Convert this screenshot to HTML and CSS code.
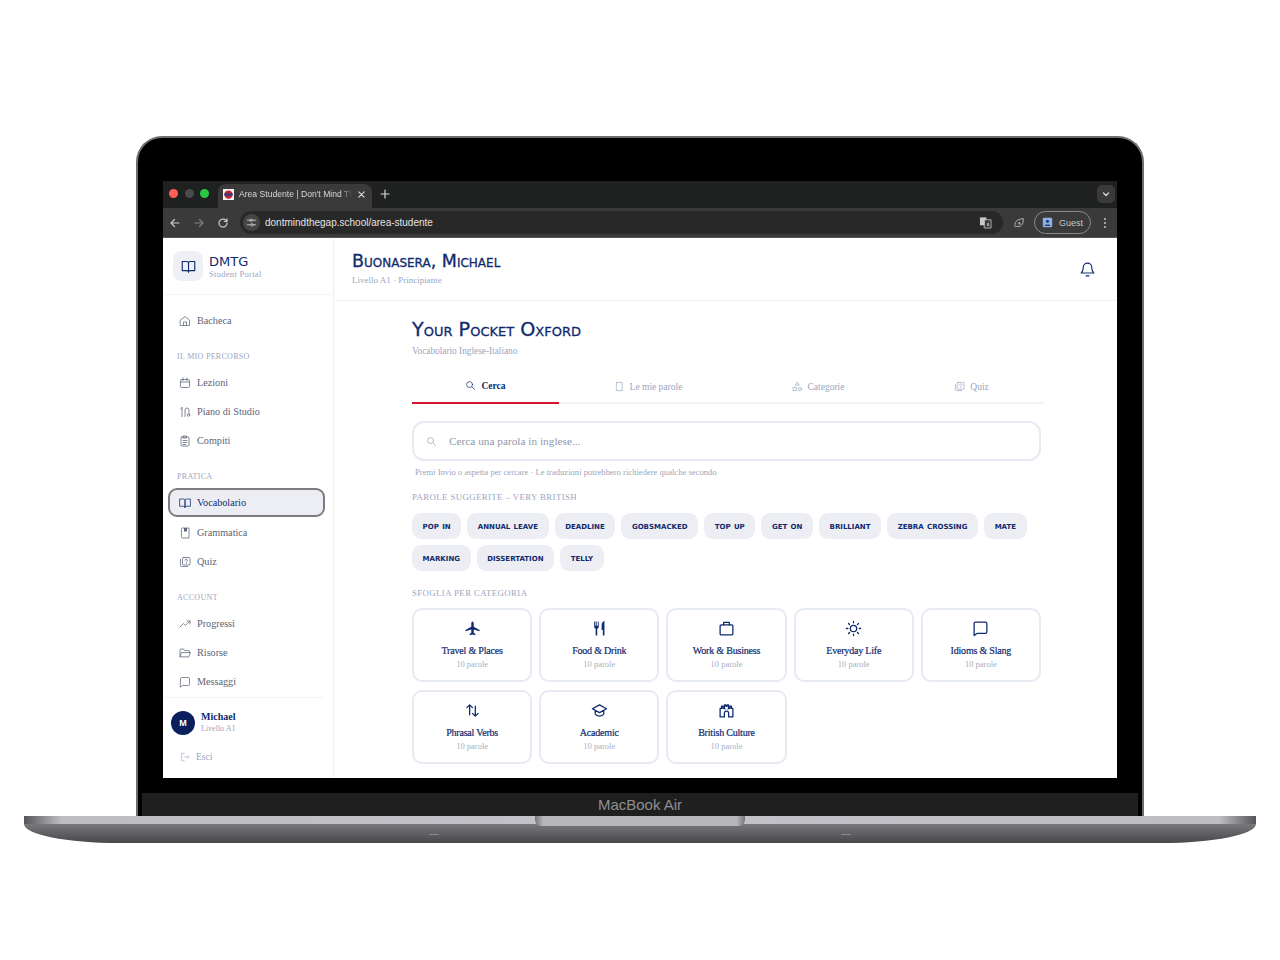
FILE: index.html
```html
<!DOCTYPE html>
<html lang="it">
<head>
<meta charset="utf-8">
<title>Area Studente | Don't Mind The Gap</title>
<link rel="stylesheet" href="styles.css">
</head>
<body>
<svg class="sprite" aria-hidden="true">
	<symbol id="i-book" viewBox="0 0 24 24"><path d="M2 4h7a3 3 0 0 1 3 3v14a2.500 2.500 0 0 0-2.500-2.500H2zM22 4h-7a3 3 0 0 0-3 3v14a2.500 2.500 0 0 1 2.500-2.500H22z"/></symbol>
	<symbol id="i-search" viewBox="0 0 24 24"><circle cx="10" cy="10" r="6.500"/><path d="M15 15l6 6"/></symbol>
	<symbol id="i-quiz" viewBox="0 0 24 24"><rect x="7" y="3" width="15" height="15" rx="2"/><path d="M3 7v12a2 2 0 0 0 2 2h12M12 8.500a2.500 2.500 0 1 1 3.500 2.500c-.8.400-1 .9-1 1.500M14.500 15v.1"/></symbol>
	<symbol id="i-msg" viewBox="0 0 24 24"><path d="M3 5a2 2 0 0 1 2-2h14a2 2 0 0 1 2 2v12a2 2 0 0 1-2 2H7l-4 3z"/></symbol>
</svg>

<div class="laptop">
	<div class="lid">
		<div class="screen">
			<div class="tabstrip">
				<div class="lights"><i class="red"></i><i class="off"></i><i class="green"></i></div>
				<div class="tab">
					<svg class="favicon" viewBox="0 0 12 12"><rect width="12" height="12" fill="#f4f4f4"/><circle cx="6" cy="6" r="4.500" fill="#c8202f"/><rect x="1.500" y="4.800" width="9" height="2.400" fill="#27408b"/></svg>
					<span class="tab-title">Area Studente | Don't Mind Th</span>
					<svg class="tab-x" viewBox="0 0 10 10"><path d="M2 2l6 6M8 2l-6 6"/></svg>
				</div>
				<svg class="tab-plus" viewBox="0 0 10 10"><path d="M5 1v8M1 5h8"/></svg>
				<div class="tab-menu"><svg viewBox="0 0 10 10"><path d="M2.500 4l2.500 2.500L7.500 4"/></svg></div>
			</div>
			<div class="toolbar">
				<svg class="tool" viewBox="0 0 12 12"><path d="M10 6H2M5.500 2.500L2 6l3.500 3.500"/></svg>
				<svg class="tool dim" viewBox="0 0 12 12"><path d="M2 6h8M6.500 2.500L10 6l-3.500 3.500"/></svg>
				<svg class="tool" viewBox="0 0 12 12"><path d="M10 6a4 4 0 1 1-1.200-2.800L10 4.500M10 1.800v2.700H7.300"/></svg>
				<div class="omnibox">
					<span class="tune"><svg viewBox="0 0 12 12"><path d="M1.500 3.500h3M7 3.500h3.500M1.500 8.500H5M8 8.500h2.500"/><circle cx="5.500" cy="3.500" r="1.300"/><circle cx="6.500" cy="8.500" r="1.300"/></svg></span>
					<span class="url">dontmindthegap.school/area-studente</span>
					<svg class="translate" viewBox="0 0 14 14"><rect x="1" y="1.500" width="7" height="8.500" fill="#c9c9c9" stroke="none"/><rect x="6" y="4" width="7" height="9" fill="#3c3c3c"/><path d="M9 10.500l.8-3 .8 3"/></svg>
				</div>
				<svg class="leaf" viewBox="0 0 14 14"><path d="M2.500 11.500C1 7 3.500 2.500 12 2c.5 7-3.500 10.500-8 9M6 7.500l2-1.500-1 2.500 1.500-.5"/></svg>
				<div class="guest">
					<svg viewBox="0 0 14 14"><rect x="1" y="1" width="12" height="12" rx="1.500" fill="#8fb0e8"/><circle cx="7" cy="5.500" r="2" fill="#24406f"/><path d="M3 11.500c1-2.500 7-2.500 8 0z" fill="#24406f"/></svg>
					<span>Guest</span>
				</div>
				<div class="dots"><i></i><i></i><i></i></div>
			</div>

			<div class="page">
				<aside class="sidebar">
					<div class="brand">
						<div class="brand-icon"><svg class="ic"><use href="#i-book"/></svg></div>
						<div>
							<div class="brand-name">DMTG</div>
							<div class="brand-sub">Student Portal</div>
						</div>
					</div>
					<nav class="nav">
						<a class="nav-item"><svg viewBox="0 0 24 24"><path d="M3 10l9-7 9 7v11H3zM9 21v-7h6v7"/></svg>Bacheca</a>
						<div class="nav-label">IL MIO PERCORSO</div>
						<a class="nav-item"><svg viewBox="0 0 24 24"><rect x="3" y="5" width="18" height="16" rx="2"/><path d="M3 10h18M8 2v5M16 2v5"/></svg>Lezioni</a>
						<a class="nav-item"><svg viewBox="0 0 24 24"><circle cx="19" cy="18" r="2.500"/><path d="M3 6l3-3 0 18M12 21V8a4 4 0 0 1 8 0v7M6 3h0"/></svg>Piano di Studio</a>
						<a class="nav-item"><svg viewBox="0 0 24 24"><rect x="4" y="4" width="16" height="18" rx="2"/><path d="M9 2h6v4H9zM8 11h8M8 15h8M8 19h5"/></svg>Compiti</a>
						<div class="nav-label">PRATICA</div>
						<a class="nav-item active"><svg><use href="#i-book"/></svg>Vocabolario</a>
						<a class="nav-item"><svg viewBox="0 0 24 24"><path d="M5 4a2 2 0 0 1 2-2h13v20H7a2 2 0 0 1-2-2z"/><path class="solid" d="M10 2h6v8l-3-2-3 2z"/></svg>Grammatica</a>
						<a class="nav-item"><svg><use href="#i-quiz"/></svg>Quiz</a>
						<div class="nav-label">ACCOUNT</div>
						<a class="nav-item"><svg viewBox="0 0 24 24"><path d="M2 18l7-7 4 4 9-9M16 6h6v6"/></svg>Progressi</a>
						<a class="nav-item"><svg viewBox="0 0 24 24"><path d="M2 19V6a2 2 0 0 1 2-2h5l2 3h8a2 2 0 0 1 2 2v2M2 19l3-8h18l-3 8z"/></svg>Risorse</a>
						<a class="nav-item"><svg><use href="#i-msg"/></svg>Messaggi</a>
					</nav>
					<div class="side-foot">
						<div class="user">
							<div class="avatar">M</div>
							<div>
								<div class="user-name">Michael</div>
								<div class="user-level">Livello A1</div>
							</div>
						</div>
						<a class="logout"><svg viewBox="0 0 24 24"><path d="M10 3H4v18h6M11 12h10M18 9l3 3-3 3"/></svg>Esci</a>
					</div>
				</aside>

				<main class="main">
					<header class="top">
						<div>
							<h1 class="greeting">Buonasera, Michael</h1>
							<div class="level">Livello A1 · Principiante</div>
						</div>
						<svg class="bell" viewBox="0 0 24 24"><path d="M6 9a6 6 0 0 1 12 0c0 5 1.500 6.500 3 8H3c1.500-1.500 3-3 3-8zM10 21h4"/></svg>
					</header>
					<div class="content">
						<h2 class="title">Your Pocket Oxford</h2>
						<div class="subtitle">Vocabolario Inglese-Italiano</div>
						<div class="tabs">
							<a class="tab-link on"><svg><use href="#i-search"/></svg>Cerca</a>
							<a class="tab-link"><svg viewBox="0 0 24 24"><path d="M6 3h12v18H6z"/></svg>Le mie parole</a>
							<a class="tab-link"><svg viewBox="0 0 24 24"><path d="M12 3l4 6H8zM3 14h7v7H3z"/><circle cx="17.500" cy="17.500" r="3.500"/></svg>Categorie</a>
							<a class="tab-link"><svg><use href="#i-quiz"/></svg>Quiz</a>
						</div>
						<div class="search">
							<svg><use href="#i-search"/></svg>
							<span>Cerca una parola in inglese...</span>
						</div>
						<div class="hint">Premi Invio o aspetta per cercare · Le traduzioni potrebbero richiedere qualche secondo</div>
						<div class="section-label">PAROLE SUGGERITE – VERY BRITISH</div>
						<div class="chips">
							<span class="chip">pop in</span>
							<span class="chip">annual leave</span>
							<span class="chip">deadline</span>
							<span class="chip">gobsmacked</span>
							<span class="chip">top up</span>
							<span class="chip">get on</span>
							<span class="chip">brilliant</span>
							<span class="chip">zebra crossing</span>
							<span class="chip">mate</span>
							<span class="chip">marking</span>
							<span class="chip">dissertation</span>
							<span class="chip">telly</span>
						</div>
						<div class="section-label browse">SFOGLIA PER CATEGORIA</div>
						<div class="cards">
							<div class="card">
								<svg class="fill" viewBox="0 0 24 24"><path d="M12 2c1 0 1.700 1.500 1.700 3v4.500L22 14v2l-8.300-2.500V18l2.300 1.700V21.500L12 20.500 8 21.500v-1.800l2.300-1.700v-4.500L2 16v-2l8.300-4.500V5C10.300 3.500 11 2 12 2z"/></svg>
								<b>Travel &amp; Places</b><small>10 parole</small>
							</div>
							<div class="card">
								<svg class="fill" viewBox="0 0 24 24"><path d="M5 2h1.200v6h1.300V2h1.200v6h1.300V2H11v7.500a3 3 0 0 1-2.200 2.800V22H6.600V12.300A3 3 0 0 1 4.500 9.500V2zM15 8c0-3.500 1.500-6 4-6.500V22h-2.300v-8H15z"/></svg>
								<b>Food &amp; Drink</b><small>10 parole</small>
							</div>
							<div class="card">
								<svg viewBox="0 0 24 24"><rect x="3" y="7" width="18" height="14" rx="1.500"/><path d="M8 7V3.500h8V7"/></svg>
								<b>Work &amp; Business</b><small>10 parole</small>
							</div>
							<div class="card">
								<svg viewBox="0 0 24 24"><circle cx="12" cy="12" r="4.500"/><path d="M12 2v2M12 20v2M2 12h2M20 12h2M5 5l1.400 1.400M17.600 17.600L19 19M5 19l1.400-1.400M17.600 6.400L19 5"/></svg>
								<b>Everyday Life</b><small>10 parole</small>
							</div>
							<div class="card">
								<svg><use href="#i-msg"/></svg>
								<b>Idioms &amp; Slang</b><small>10 parole</small>
							</div>
							<div class="card">
								<svg class="thick" viewBox="0 0 24 24"><path d="M8 18V4M4 8l4-4 4 4M16 6v14M12 16l4 4 4-4"/></svg>
								<b>Phrasal Verbs</b><small>10 parole</small>
							</div>
							<div class="card">
								<svg viewBox="0 0 24 24"><path d="M12 4L2 9.500 12 15l10-5.500zM6 12v5c2 4 10 4 12 0v-5"/></svg>
								<b>Academic</b><small>10 parole</small>
							</div>
							<div class="card">
								<svg viewBox="0 0 24 24"><path d="M3 21V9h2V6h2v3h2V4h2v2h2V4h2v5h2V6h2v3h2v12h-6v-5a3 3 0 0 0-6 0v5zM10 10h.1M14 10h.1"/></svg>
								<b>British Culture</b><small>10 parole</small>
							</div>
						</div>
					</div>
				</main>
			</div>
		</div>
		<div class="chin">MacBook Air</div>
	</div>
	<div class="base">
		<div class="notch"></div>
		<div class="deck"></div>
		<div class="belly"><i></i><i></i></div>
	</div>
</div>
</body>
</html>
```

FILE: styles.css
```css
*{margin:0;padding:0;box-sizing:border-box;}
body{background:#fff;font-family:"Liberation Serif",serif;color:#0f2a6d;height:960px;overflow:hidden;}
.sprite{width:0;height:0;position:absolute;}
svg{fill:none;stroke:currentColor;stroke-width:2;stroke-linecap:round;stroke-linejoin:round;flex:none;}
a{display:flex;align-items:center;}

/* laptop */
.laptop{display:flex;flex-direction:column;align-items:center;padding-top:136px;}
.lid{width:1008px;height:680px;background:#000;border:2px solid #6d6d70;border-bottom:0;border-radius:26px 26px 0 0;padding-top:43px;display:flex;flex-direction:column;align-items:center;}
.screen{width:954px;height:597px;overflow:hidden;background:#fff;display:flex;flex-direction:column;}
.chin{width:996px;height:23px;margin-top:15px;background:#1f1f1f;color:#8f8f92;font:15px/23px "Liberation Sans",sans-serif;text-align:center;}
.base{width:1232px;height:27px;position:relative;}
.deck{height:8px;background:linear-gradient(90deg,#55555a 0,#bdbdc2 3%,#c2c2c8 50%,#bdbdc2 97%,#55555a 100%);}
.belly{height:19px;background:linear-gradient(#77777c,#48484c);border-radius:0 0 95px 95px/0 0 19px 19px;display:flex;justify-content:space-between;padding:10px 405px 0 405px;}
.belly i{width:10px;height:1px;background:#8a8a8e;}
.notch{position:absolute;left:511px;top:0;width:210px;height:10px;background:linear-gradient(90deg,#77777a,#b6b6bb 4%,#b6b6bb 96%,#77777a);border-radius:0 0 6px 6px;}

/* browser chrome */
.tabstrip{height:27px;background:#1f2020;display:flex;align-items:flex-end;flex:none;}
.lights{display:flex;gap:6.500px;padding:0 9px 10px 6px;}
.lights i{width:9px;height:9px;border-radius:50%;}
.lights .red{background:#ff5f57;}
.lights .off{background:#4a4a4a;}
.lights .green{background:#28c840;}
.tab{width:154px;height:24px;background:#3a3a3a;border-radius:8px 8px 0 0;display:flex;align-items:center;padding:0 6px 4px 5px;gap:5px;}
.favicon{width:11px;height:11px;stroke:none;}
.tab-title{width:113px;white-space:nowrap;font:8.600px "Liberation Sans",sans-serif;color:#d6d6d6;-webkit-mask-image:linear-gradient(90deg,#000 90%,transparent);mask-image:linear-gradient(90deg,#000 90%,transparent);}
.tab-x{width:9px;height:9px;color:#d6d6d6;stroke-width:1.300;}
.tab-plus{width:10px;height:10px;color:#d6d6d6;margin:0 0 9px 8px;stroke-width:1.200;}
.tab-menu{margin:0 2px 5px auto;width:18px;height:18px;border-radius:5px;background:#3a3a3a;color:#d6d6d6;display:flex;align-items:center;justify-content:center;}
.tab-menu svg{width:10px;height:10px;stroke-width:1.300;}
.toolbar{height:30px;background:#3a3a3a;border-bottom:1px solid #555;display:flex;align-items:center;padding-left:6px;flex:none;color:#c7c7c7;}
.tool{width:12px;height:12px;margin-right:12px;stroke-width:1.200;}
.tool.dim{color:#808080;}
.omnibox{width:763px;height:23px;margin-left:-1px;background:#282828;border-radius:12px;display:flex;align-items:center;padding-left:3px;}
.tune{width:17px;height:17px;border-radius:50%;background:#454545;display:flex;align-items:center;justify-content:center;}
.tune svg{width:11px;height:11px;stroke-width:1;}
.url{font:10px "Liberation Sans",sans-serif;color:#e3e3e3;margin-left:5px;}
.translate{width:13px;height:13px;margin-left:auto;margin-right:11px;stroke-width:.8;color:#d0d0d0;}
.leaf{width:12px;height:12px;margin-left:10px;stroke-width:1;}
.guest{width:57px;height:23px;margin-left:9px;border:1px solid #8a8a8a;border-radius:12px;display:flex;align-items:center;gap:6px;padding-left:7px;font:9px "Liberation Sans",sans-serif;}
.guest svg{width:11px;height:11px;stroke:none;}
.dots{margin-left:13px;display:flex;flex-direction:column;gap:2px;}
.dots i{width:2px;height:2px;border-radius:50%;background:#c7c7c7;}

/* page */
.page{flex:1;display:flex;min-height:0;}
.sidebar{width:171px;border-right:1px solid #eef0f5;display:flex;flex-direction:column;flex:none;}
.brand{height:57px;border-bottom:1px solid #f3f4f8;display:flex;align-items:center;gap:6px;padding-left:10px;flex:none;}
.brand-icon{width:30px;height:30px;border-radius:8px;background:#eef0f5;display:flex;align-items:center;justify-content:center;}
.ic{width:15px;height:15px;stroke-width:1.800;}
.brand-name{font:13px/15px "DejaVu Sans",sans-serif;}
.brand-sub{font-size:8.500px;line-height:10px;color:#9aa6bf;letter-spacing:.3px;}
.nav{padding:11px 8px 0 5px;}
.nav-item{height:29px;border:2px solid transparent;border-radius:9px;padding-left:9px;gap:6px;font-size:10.200px;color:#5b6478;}
.nav-item svg{width:12px;height:12px;stroke-width:1.500;}
.nav-item .solid{fill:currentColor;stroke:none;}
.nav-item.active{background:#eceef4;border-color:#7d7d80;color:#0f2a6d;margin-bottom:1px;}
.nav-label{height:33px;padding:16px 0 0 9px;font-size:8px;line-height:12px;letter-spacing:.3px;color:#9aa6bf;}
.side-foot{margin:1px 8px 0 0;border-top:1px solid #f3f4f8;padding:13px 0 0 8px;}
.user{display:flex;align-items:center;gap:6px;}
.avatar{width:24px;height:24px;border-radius:50%;background:#0a1f5c;color:#fff;font:bold 9px/24px "Liberation Sans",sans-serif;text-align:center;}
.user-name{font-size:10px;line-height:12px;font-weight:bold;}
.user-level{font-size:8px;line-height:12px;color:#9aa6bf;}
.logout{margin:17px 0 0 9px;gap:6px;font-size:9.500px;color:#9aa6bf;}
.logout svg{width:10px;height:10px;stroke-width:1.500;}

.main{flex:1;min-width:0;}
.top{height:63px;border-bottom:1px solid #f0f2f6;display:flex;align-items:center;justify-content:space-between;padding:0 21px 0 18px;}
.greeting{font:normal 17.500px/18px "DejaVu Sans",sans-serif;font-variant:small-caps;-webkit-text-stroke:.3px currentColor;}
.level{font-size:9px;line-height:14px;color:#9aa6bf;margin-top:3px;}
.bell{width:17px;height:17px;stroke-width:1.600;}

.content{padding:19px 73px 0 78px;}
.title{font:normal 19.200px/20px "DejaVu Sans",sans-serif;font-variant:small-caps;-webkit-text-stroke:.3px currentColor;}
.subtitle{font-size:9.300px;line-height:14px;color:#9aa6bf;margin-top:4px;}
.tabs{display:grid;grid-template-columns:147px 178px 162px 1fr;height:35px;margin-top:11px;border-bottom:2px solid #f1f3f7;}
.tab-link{justify-content:center;gap:5px;font-size:9.500px;color:#9aa6bf;height:35px;}
.tab-link svg{width:11px;height:11px;stroke-width:1.500;}
.tab-link.on{color:#0f2a6d;border-bottom:2px solid #d5152b;font-weight:bold;}
.search{width:629px;height:40px;margin-top:17px;border:2px solid #e6eaf3;border-radius:12px;display:flex;align-items:center;padding-left:12px;gap:12px;font-size:11.300px;color:#8f99ad;}
.search svg{width:11px;height:11px;stroke-width:1.800;color:#a6afc2;}
.hint{font-size:8.600px;line-height:11px;color:#9aa6bf;margin:6px 0 0 3px;}
.section-label{font-size:8.800px;line-height:12px;letter-spacing:.4px;color:#9aa6bf;margin-top:13px;}
.chips{display:flex;flex-wrap:wrap;gap:6px;margin-top:10px;width:629px;}
.chip{height:26px;padding:0 10.600px;border-radius:9px;background:#eceef4;font:bold 9.600px/26px "DejaVu Sans",sans-serif;font-variant:small-caps;text-transform:lowercase;}
.browse{margin-top:16px;}
.cards{display:grid;grid-template-columns:repeat(5,1fr);gap:8px 7px;margin-top:9px;width:629px;}
.card{height:74px;border:2px solid #e6eaf3;border-radius:10px;display:flex;flex-direction:column;align-items:center;padding-top:10px;text-align:center;}
.card svg{width:17px;height:17px;stroke-width:1.800;}
.card svg.fill{fill:currentColor;stroke:none;}
.card b{font-weight:normal;font-size:10px;line-height:13px;margin-top:7px;letter-spacing:-.2px;-webkit-text-stroke:.2px currentColor;}
.card small{font-size:8.500px;line-height:13px;margin-top:1px;color:#a6afc2;}
```
